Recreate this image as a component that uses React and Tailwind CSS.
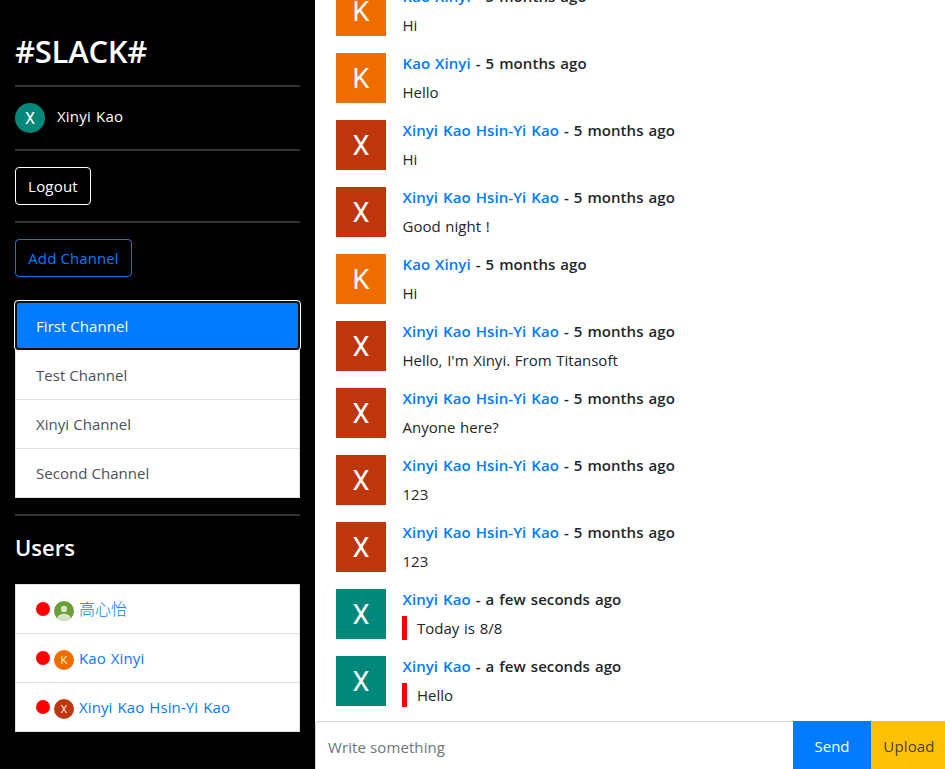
const channels = ['Test Channel', 'Xinyi Channel', 'Second Channel'];

const X = 'Xinyi Kao Hsin-Yi Kao';
const K = 'Kao Xinyi';
const months = '5 months ago';
const messages = [
  { name: K, time: months, text: 'Hi' },
  { name: K, time: months, text: 'Hello' },
  { name: X, time: months, text: 'Hi' },
  { name: X, time: months, text: 'Good night !' },
  { name: K, time: months, text: 'Hi' },
  { name: X, time: months, text: "Hello, I'm Xinyi. From Titansoft" },
  { name: X, time: months, text: 'Anyone here?' },
  { name: X, time: months, text: '123' },
  { name: X, time: months, text: '123' },
  { name: 'Xinyi Kao', time: 'a few seconds ago', text: 'Today is 8/8', mine: true },
  { name: 'Xinyi Kao', time: 'a few seconds ago', text: 'Hello', mine: true },
];

const avatarColor = {
  [K]: 'bg-[#ef6c00]',
  [X]: 'bg-[#bf360c]',
  'Xinyi Kao': 'bg-[#00897b]',
};

function Rule() {
  return <hr className="my-4 h-0.5 shrink-0 border-0 bg-[#333]" />;
}

function Message({ name, time, text, mine }) {
  return (
    <li className="flex h-[67px] shrink-0 gap-4">
      <div className={`flex size-[50px] items-center justify-center pt-[3px] font-[Roboto] text-[27px] leading-none text-white ${avatarColor[name]}`}>
        {name[0]}
      </div>
      <div>
        <h6 className="mb-2 h-[19px] pt-px pl-[0.5px] text-[15px] leading-[19px] font-semibold tracking-[0.07px] [word-spacing:1px] whitespace-pre">
          <span className="text-[#007bff]">{name}</span> - {time}
        </h6>
        <p className={`h-6 text-[15px] leading-6 [word-spacing:0.8px] ${mine ? 'border-l-[5px] border-[#f00] pl-2.5' : 'pl-[0.5px]'}`}>{text}</p>
      </div>
    </li>
  );
}

function PersonIcon() {
  return (
    <svg viewBox="0 0 20 20" className="size-5 rounded-full">
      <rect width="20" height="20" fill="#689f38" />
      <circle cx="10" cy="8" r="3.2" fill="#d5e5c6" />
      <ellipse cx="10" cy="17" rx="6.6" ry="4.2" fill="#d5e5c6" />
    </svg>
  );
}

function User({ name, cjk }) {
  return (
    <li className="flex h-[49px] items-center border-b border-[#dfdfdf] pl-5 text-[15px] text-[#007bff]">
      <span className="mr-1 size-3.5 rounded-full bg-[#f00]" />
      <span className="mt-[3px] mr-[5px] size-5">
        {cjk ? <PersonIcon /> : (
          <span className={`flex size-5 items-center justify-center rounded-full pt-px font-[Roboto] text-[11px] leading-none text-white/80 ${avatarColor[name]}`}>{name[0]}</span>
        )}
      </span>
      <span className={cjk ? "-mt-0.5 font-['Noto_Sans_CJK_TC',sans-serif] text-[16px] font-light" : 'tracking-[0.1px] [word-spacing:1px]'}>{name}</span>
    </li>
  );
}

export default function App() {
  return (
    <div className="flex h-[769px] w-[945px] overflow-hidden bg-white font-['Open_Sans','Noto_Sans_CJK_TC',sans-serif] text-[15px] text-[#212529]">
      <aside className="flex w-[315px] flex-col bg-black px-[15px] pt-8 text-white">
        <h1 className="h-[37px] text-[31px] leading-[39px] font-semibold tracking-[-0.25px]">#SLACK#</h1>
        <Rule />
        <div className="flex h-[30px] items-center">
          <div className="flex size-[30px] items-center justify-center rounded-full bg-[#00897b] pt-px font-[Roboto] text-[16px] leading-none">X</div>
          <span className="-mt-1 ml-3 tracking-[0.2px] [word-spacing:1px]">Xinyi Kao</span>
        </div>
        <Rule />
        <button className="h-[38px] w-[76px] shrink-0 rounded-[4px] border border-white pt-px tracking-[0.2px]">Logout</button>
        <Rule />
        <button className="h-[38px] w-[117px] shrink-0 rounded-[4px] border border-[#007bff] pt-px tracking-[0.1px] text-[#007bff]">Add Channel</button>

        <ul className="mt-6 shrink-0 bg-white tracking-[0.05px] text-[#495057]">
          <li className="relative -mx-px -mt-px flex h-[51px] items-center rounded-[4px] border border-white bg-[#101010] p-0.5 text-white">
            <span className="flex h-full w-full items-center rounded-[2px] bg-[#007bff] pt-px pl-[19px]">First Channel</span>
          </li>
          {channels.map((c) => (
            <li key={c} className="flex h-[49px] items-center border-x border-b border-[#dfdfdf] pl-5">{c}</li>
          ))}
        </ul>
        <Rule />
        <h4 className="h-[29px] shrink-0 text-[22px] leading-[31px] font-semibold">Users</h4>
        <ul className="mt-[23px] shrink-0 border border-b-0 border-[#dfdfdf] bg-white">
          <User name="高心怡" cjk />
          <User name={K} />
          <User name={X} />
        </ul>
      </aside>

      <main className="flex w-[630px] flex-col">
        <div className="flex h-[721px] flex-col justify-end overflow-hidden pl-[21px]">
          <ul className="-mb-0.5 shrink-0">
            {messages.map((m, i) => <Message key={i} {...m} />)}
          </ul>
        </div>
        <form className="flex h-12 shrink-0">
          <input placeholder="Write something" className="h-12 w-[478px] rounded-tl-[4px] border-t border-l border-[#ced4da] px-3 pt-0.5 tracking-[0.1px] placeholder:text-[#6c757d] placeholder:opacity-100" />
          <button type="button" className="w-[78px] bg-[#007bff] pt-0.5 text-white">Send</button>
          <button type="button" className="w-[74px] bg-[#ffc107] pt-0.5 pl-0.5 tracking-[0.15px] text-[#212529]/85">Upload</button>
        </form>
      </main>
    </div>
  );
}
